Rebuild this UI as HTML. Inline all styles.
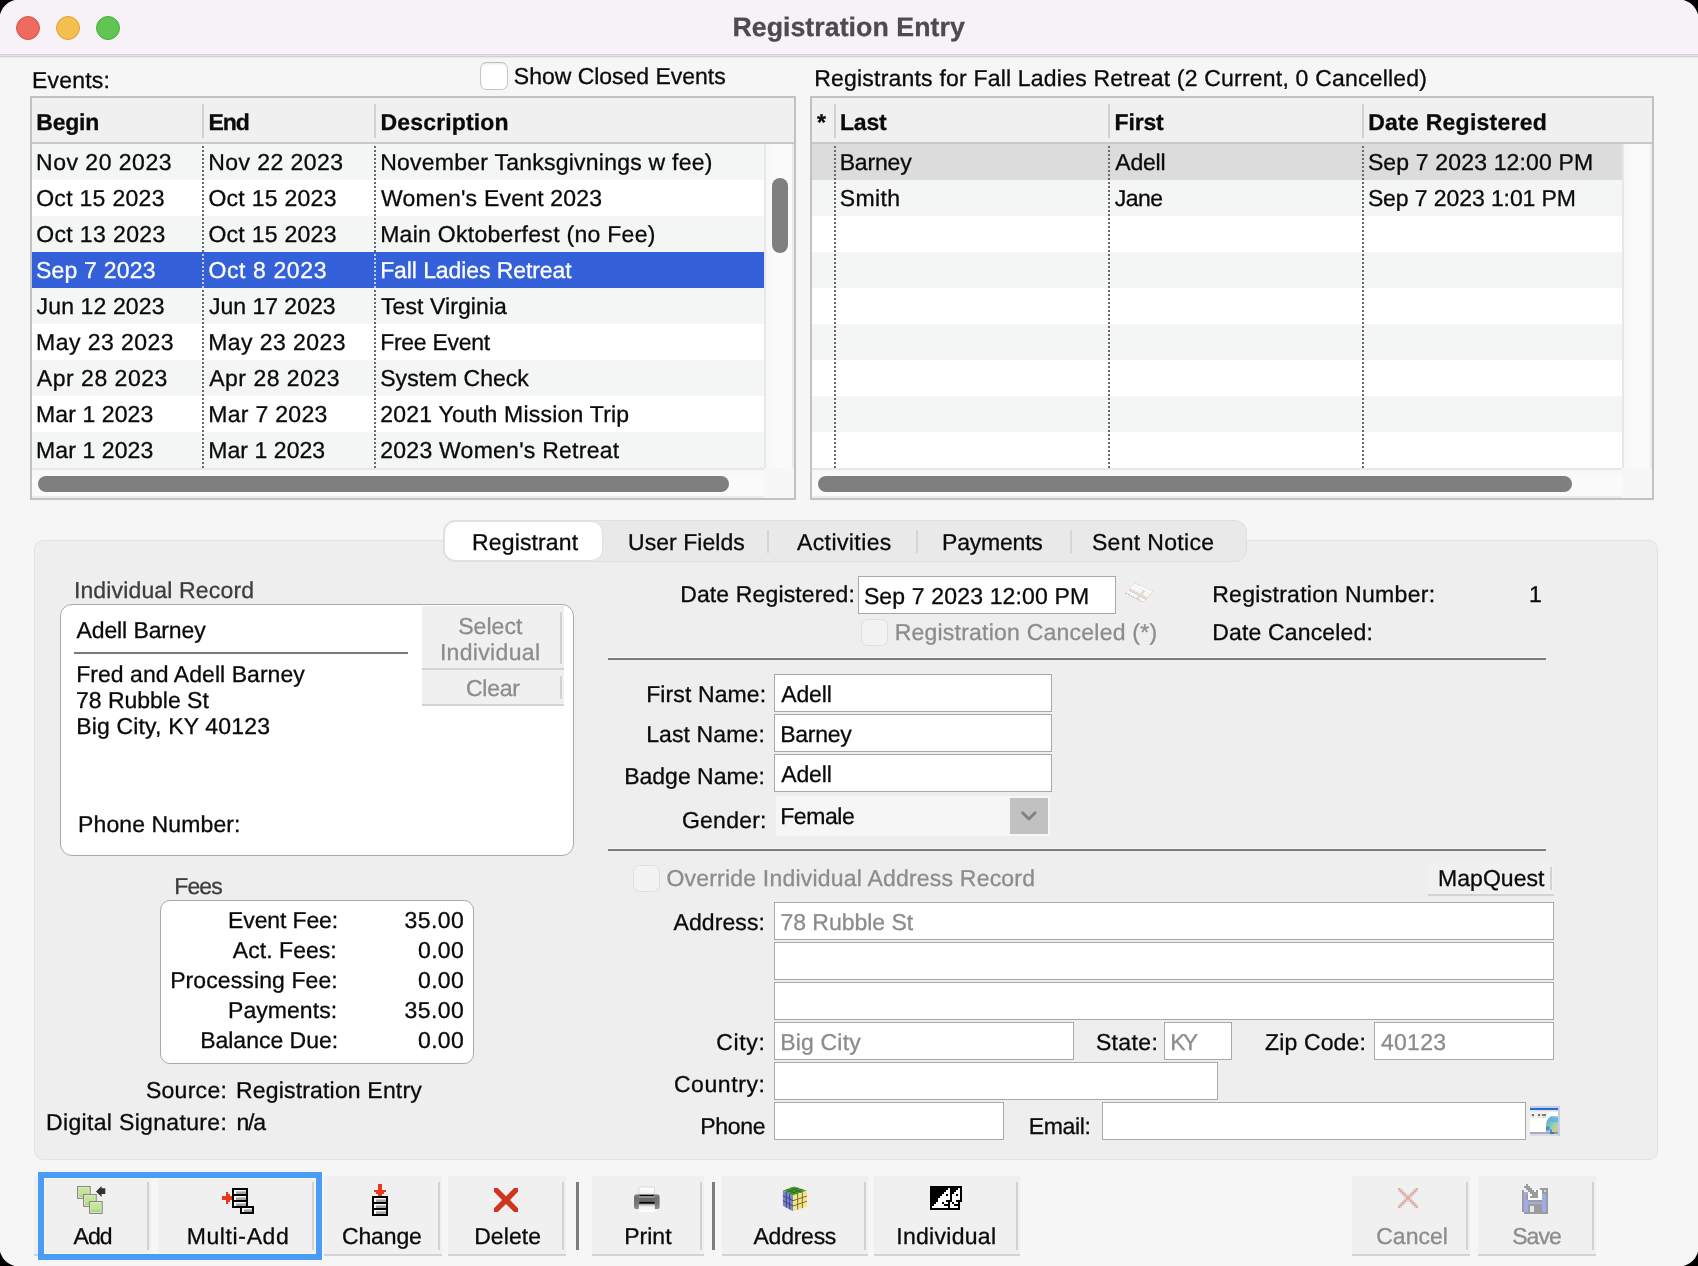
<!DOCTYPE html>
<html><head><meta charset="utf-8"><title>Registration Entry</title>
<style>

html,body{margin:0;padding:0;background:#000;}
body{width:1698px;height:1266px;overflow:hidden;font-family:"Liberation Sans",sans-serif;}
#win{will-change:transform;position:absolute;left:0;top:0;width:1698px;height:1266px;background:#f6f6f6;overflow:hidden;}
#win *{position:absolute;box-sizing:border-box;}
.t{text-rendering:geometricPrecision;font-size:23px;line-height:23px;white-space:pre;color:#0a0a0a;-webkit-text-stroke:0.3px;}
#tb{left:0;top:0;width:1698px;height:53px;background:#f6f2f8;}
#tbl{left:0;top:53px;width:1698px;height:6px;background:linear-gradient(to bottom,#faf6fc 0,#faf6fc 1px,#d2ced3 1px,#d2ced3 2px,#e7e4e9 2px,#e7e4e9 3px,#d1d1d1 3px,#d1d1d1 4px,#eaeaea 4px,#eaeaea 5px,#f3f3f3 5px,#f3f3f3 6px);}
.tl{top:16px;width:24px;height:24px;border-radius:12px;}
.tbx{border:2px solid #c2c2c2;background:#fff;}
.hdr{background:#f0f0f0;border-bottom:2px solid #c9c9c9;}
.hs{width:2px;top:8px;height:34px;background:#d1d1d1;}
.row{height:36px;}
.alt{background:#f4f5f5;}
.sel{background:#3461d9;}
.gsel{background:#dcdcdc;}
.dot{width:2px;background:repeating-linear-gradient(to bottom,transparent 0,transparent 2px,#696969 2px,#696969 4px);}
.dotw{width:2px;background:repeating-linear-gradient(to bottom,transparent 0,transparent 2px,#c3cff2 2px,#c3cff2 4px);}
.vtrack{background:linear-gradient(to right,#e7e7e7 0,#e7e7e7 2px,#f7f7f7 2px,#fbfbfb 14px,#fafafa 28px,#ececec 28px,#ececec 100%);}
.htrack{background:linear-gradient(to bottom,#e7e7e7 0,#e7e7e7 2px,#f7f7f7 2px,#fbfbfb 14px,#fafafa 28px,#ececec 28px,#ececec 100%);}
.corner{background:#f7f7f7;}
.thumb{background:#7f7f7f;border-radius:8px;}
.grp{background:#eeeeee;border:1px solid #e2e2e2;border-radius:9px;}
.tabs{background:#e9e9e9;border:1px solid #e0e0e0;border-radius:12px;}
.tabsel{background:#fff;border-radius:10px;box-shadow:0 0 2px rgba(0,0,0,.12);}
.tsep{width:2px;top:530px;height:23px;background:#d6d6d6;}
.wbox{background:#fff;border:1px solid #a9a9a9;}
.inp{background:#fff;border:1px solid #a8a8a8;}
.btn{background:#f0f0f0;border-bottom:2px solid #d3d3d3;}
.vl{width:2px;background:#d2d2d2;}
.ln{height:2px;background:#7b7b7b;box-shadow:0 -1px 0 rgba(255,255,255,.55);}
.cb{width:27px;height:27px;border-radius:6.5px;}
.cbd{background:#f2f2f2;border:1px solid #dedede;}
.cbe{width:27.6px;height:27.8px;background:#fff;border:1px solid #c6c6c6;border-top-color:#bdbdbd;box-shadow:inset 0 1.5px 1.5px rgba(0,0,0,.07);}
.vsep{width:2.6px;top:1182px;height:68px;background:#7c7c7c;}
svg{overflow:visible;}

</style></head>
<body>
<div id="win">
<div id="tb"></div><div id="tbl"></div>
<div class="tl" style="left:16px;background:#ed6a5e;border:1px solid #d5574b"></div>
<div class="tl" style="left:56px;background:#f5bf4f;border:1px solid #dba53a"></div>
<div class="tl" style="left:96px;background:#61c554;border:1px solid #4eaa41"></div>
<div class="cb cbe" style="left:480.2px;top:62px"></div>
<div class="tbx" style="left:30px;top:96px;width:766px;height:404px"></div>
<div class="hdr" style="left:32px;top:98px;width:762px;height:46px"></div>
<div class="hs" style="left:202px;top:104px"></div>
<div class="hs" style="left:374px;top:104px"></div>
<div class="row alt" style="left:32px;top:144px;width:732px"></div>
<div class="row alt" style="left:32px;top:216px;width:732px"></div>
<div class="row sel" style="left:32px;top:252px;width:732px"></div>
<div class="row alt" style="left:32px;top:288px;width:732px"></div>
<div class="row alt" style="left:32px;top:360px;width:732px"></div>
<div class="row alt" style="left:32px;top:432px;width:732px"></div>
<div class="dot" style="left:202px;top:144px;height:324px"></div>
<div class="sel" style="left:202px;top:252px;width:2px;height:36px"></div>
<div class="dotw" style="left:202px;top:252px;height:36px"></div>
<div class="dot" style="left:374px;top:144px;height:324px"></div>
<div class="sel" style="left:374px;top:252px;width:2px;height:36px"></div>
<div class="dotw" style="left:374px;top:252px;height:36px"></div>
<div class="vtrack" style="left:764px;top:144px;width:30px;height:324px"></div>
<div class="htrack" style="left:32px;top:468px;width:732px;height:30px"></div>
<div class="corner" style="left:764px;top:468px;width:30px;height:30px"></div>
<div class="thumb" style="left:772px;top:178px;width:16px;height:75px"></div>
<div class="thumb" style="left:38px;top:476px;width:691px;height:16px"></div>
<div class="tbx" style="left:810px;top:96px;width:844px;height:404px"></div>
<div class="hdr" style="left:812px;top:98px;width:840px;height:46px"></div>
<div class="hs" style="left:834px;top:104px"></div>
<div class="hs" style="left:1108px;top:104px"></div>
<div class="hs" style="left:1362px;top:104px"></div>
<div class="row gsel" style="left:812px;top:144px;width:810px"></div>
<div class="row alt" style="left:812px;top:180px;width:810px"></div>
<div class="row alt" style="left:812px;top:252px;width:810px"></div>
<div class="row alt" style="left:812px;top:324px;width:810px"></div>
<div class="row alt" style="left:812px;top:396px;width:810px"></div>
<div class="dot" style="left:834px;top:144px;height:324px"></div>
<div class="dot" style="left:1108px;top:144px;height:324px"></div>
<div class="dot" style="left:1362px;top:144px;height:324px"></div>
<div class="vtrack" style="left:1622px;top:144px;width:30px;height:324px"></div>
<div class="htrack" style="left:812px;top:468px;width:810px;height:30px"></div>
<div class="corner" style="left:1622px;top:468px;width:30px;height:30px"></div>
<div class="thumb" style="left:818px;top:476px;width:754px;height:16px"></div>
<div class="grp" style="left:34px;top:540px;width:1624px;height:620px"></div>
<div class="tabs" style="left:443px;top:520px;width:804px;height:42px"></div>
<div class="tabsel" style="left:445px;top:522px;width:156.5px;height:38px"></div>
<div class="tsep" style="left:767px"></div>
<div class="tsep" style="left:916px"></div>
<div class="tsep" style="left:1069.5px"></div>
<div class="wbox" style="left:60px;top:604px;width:514px;height:252px;border-radius:12px"></div>
<div style="left:74px;top:651.5px;width:334px;height:2px;background:#7b7b7b"></div>
<div class="btn" style="left:422px;top:606px;width:142px;height:64px"></div><div class="vl" style="left:560px;top:612px;height:52px"></div>
<div class="btn" style="left:422px;top:670px;width:142px;height:36px"></div><div class="vl" style="left:560px;top:676px;height:23px"></div>
<div class="wbox" style="left:160px;top:900px;width:314px;height:164px;border-radius:10px"></div>
<div class="inp" style="left:858px;top:576px;width:258px;height:38px"></div>
<div class="cb cbd" style="left:860.5px;top:618.5px"></div>
<div class="ln" style="left:608px;top:658px;width:938px"></div>
<div class="inp" style="left:774px;top:674px;width:278px;height:38px"></div>
<div class="inp" style="left:774px;top:714px;width:278px;height:38px"></div>
<div class="inp" style="left:774px;top:754px;width:278px;height:38px"></div>
<div style="left:776px;top:796px;width:274px;height:40px;background:#f6f6f6"></div>
<div style="left:1010px;top:798px;width:38px;height:36px;background:#c1c1c1"></div>
<svg style="left:1010px;top:798px" width="38" height="36" viewBox="0 0 38 36" ><path d="M12.6 14.7 L18.9 21 L25.2 14.7" fill="none" stroke="#818181" stroke-width="2.8" stroke-linecap="round" stroke-linejoin="round"/></svg>
<div class="ln" style="left:608px;top:849px;width:938px"></div>
<div class="cb cbd" style="left:632.5px;top:864.5px"></div>
<div class="btn" style="left:1428px;top:861px;width:126px;height:35px"></div><div class="vl" style="left:1550px;top:867px;height:23px"></div>
<div class="inp" style="left:774px;top:902px;width:780px;height:38px"></div>
<div class="inp" style="left:774px;top:942px;width:780px;height:38px"></div>
<div class="inp" style="left:774px;top:982px;width:780px;height:38px"></div>
<div class="inp" style="left:774px;top:1022px;width:300px;height:38px"></div>
<div class="inp" style="left:1164px;top:1022px;width:68px;height:38px"></div>
<div class="inp" style="left:1374px;top:1022px;width:180px;height:38px"></div>
<div class="inp" style="left:774px;top:1062px;width:444px;height:38px"></div>
<div class="inp" style="left:774px;top:1102px;width:230px;height:38px"></div>
<div class="inp" style="left:1102px;top:1102px;width:424px;height:38px"></div>
<svg style="left:1124px;top:582px" width="30" height="22" viewBox="0 0 30 22" ><polygon points="1.3,10.4 10.9,1 29,9.3 19.1,20.3" fill="#fbfbfb" stroke="#e2e2e2" stroke-width="0.7"/><path d="M5 7.5 L22.5 16.5" stroke="#ecd0d0" stroke-width="2.6" opacity=".9"/><path d="M20.3 8.5 L13.2 17" stroke="#d4e3d0" stroke-width="2.6" opacity=".9"/><path d="M1.8 11 L19.1 20.2" stroke="#9a9a9a" stroke-width="1.1" stroke-dasharray="1.3 1.5" opacity=".75"/><path d="M28.6 9.6 L19.4 20" stroke="#a5a5a5" stroke-width="1" stroke-dasharray="1.2 2" opacity=".6"/><path d="M11.5 1.6 L17 4" stroke="#aaa" stroke-width="1" stroke-dasharray="1.2 1.6" opacity=".6"/><path d="M8.5 3.4 L26.5 12 M6 5.8 L24.2 14.6 M3.6 8.2 L21.6 17.4 M14.5 2.7 L5 12.3 M18.5 4.5 L8.8 14.6 M22 6.2 L12.4 16.6 M25.5 7.8 L15.8 18.4" stroke="#b8b8b8" stroke-width="0.6" stroke-dasharray="1 1.4" opacity=".55" fill="none"/></svg>
<svg style="left:1530px;top:1106px" width="30" height="30" viewBox="0 0 30 30" ><defs><linearGradient id="wg" x1="0" y1="0" x2="1" y2="1"><stop offset="0" stop-color="#4a9be6"/><stop offset="0.45" stop-color="#7fc7c0"/><stop offset="0.8" stop-color="#c9cf8c"/><stop offset="1" stop-color="#d8c07c"/></linearGradient></defs><rect x="0" y="0" width="30" height="30" fill="#c3cdf2"/><rect x="0" y="2" width="28" height="2.2" fill="#2a6bcc"/><rect x="26.2" y="2" width="1.8" height="2.2" fill="#5a57a8"/><rect x="0" y="4.2" width="28" height="1.8" fill="#e6edf1"/><rect x="0" y="6" width="28" height="6" fill="#f1f1ee"/><rect x="1.8" y="8" width="2.2" height="2" fill="#70706c"/><rect x="8" y="8" width="2.2" height="2" fill="#70706c"/><rect x="12" y="8" width="4" height="2" fill="#7a7a76"/><rect x="2" y="10.8" width="2" height="0.9" fill="#cfcfcb"/><rect x="8" y="10.8" width="2" height="0.9" fill="#cfcfcb"/><rect x="12" y="10.8" width="4" height="0.9" fill="#cfcfcb"/><rect x="18" y="6" width="10" height="4" fill="#fffffc"/><rect x="0" y="12" width="28" height="14" fill="#fffffc"/><path d="M28 10.2 H21 Q16 13 16 20 V26 H28 Z" fill="url(#wg)"/><path d="M28 12 H22 Q19.5 13.2 18.6 16 H28 Z" fill="#5cb5ea" opacity=".9"/><rect x="16" y="20.5" width="3.6" height="3.6" fill="#3d90e0"/><rect x="20" y="23.5" width="2" height="2.5" fill="#3d90e0"/><rect x="0" y="26" width="28" height="2" fill="#aaa7c8"/><rect x="20" y="26" width="4" height="2" fill="#3f78c6"/><rect x="24" y="26" width="4" height="2" fill="#97978f"/><rect x="0" y="28" width="28" height="2" fill="#dcdcdc"/></svg>
<div class="btn" style="left:34px;top:1176px;width:117px;height:80px"></div><div class="vl" style="left:147px;top:1182px;height:68px"></div>
<div class="btn" style="left:158px;top:1176px;width:158px;height:80px"></div><div class="vl" style="left:312px;top:1182px;height:68px"></div>
<div class="btn" style="left:324px;top:1176px;width:118px;height:80px"></div><div class="vl" style="left:438px;top:1182px;height:68px"></div>
<div class="btn" style="left:448px;top:1176px;width:118px;height:80px"></div><div class="vl" style="left:562px;top:1182px;height:68px"></div>
<div class="btn" style="left:592px;top:1176px;width:111.5px;height:80px"></div><div class="vl" style="left:699.5px;top:1182px;height:68px"></div>
<div class="btn" style="left:722px;top:1176px;width:145.5px;height:80px"></div><div class="vl" style="left:863.5px;top:1182px;height:68px"></div>
<div class="btn" style="left:874px;top:1176px;width:145.5px;height:80px"></div><div class="vl" style="left:1015.5px;top:1182px;height:68px"></div>
<div class="btn" style="left:1352px;top:1176px;width:117.5px;height:80px"></div><div class="vl" style="left:1465.5px;top:1182px;height:68px"></div>
<div class="btn" style="left:1478px;top:1176px;width:117.5px;height:80px"></div><div class="vl" style="left:1591.5px;top:1182px;height:68px"></div>
<div style="left:38px;top:1172px;width:284px;height:88px;border:6px solid #4a9df6;box-shadow:inset 0 0 0 1px rgba(255,246,235,.8)"></div>
<div class="vsep" style="left:576px"></div><div class="vsep" style="left:712px"></div>
<svg style="left:77px;top:1186px" width="30" height="30" viewBox="0 0 30 30" ><defs><linearGradient id="gg" x1="0" y1="0" x2="0" y2="1"><stop offset="0" stop-color="#c6e79c"/><stop offset="0.65" stop-color="#c2e396"/><stop offset="1" stop-color="#a9d07c"/></linearGradient></defs><rect x="0.1" y="0.1" width="13.6" height="12.8" fill="#7d7d7d"/><rect x="1.1" y="1.0" width="11.6" height="10.9" fill="#dcf0c0"/><rect x="2.0" y="1.8" width="9.8" height="9.2" fill="url(#gg)"/><rect x="6.1" y="8.1" width="13.6" height="12.8" fill="#7d7d7d"/><rect x="7.1" y="9.0" width="11.6" height="10.9" fill="#dcf0c0"/><rect x="8.0" y="9.799999999999999" width="9.8" height="9.2" fill="url(#gg)"/><rect x="12.1" y="15.1" width="13.6" height="12.8" fill="#7d7d7d"/><rect x="13.1" y="16.0" width="11.6" height="10.9" fill="#dcf0c0"/><rect x="14.0" y="16.8" width="9.8" height="9.2" fill="url(#gg)"/><path d="M19 5.5 L24.6 -0.1 L24.6 2.2 L28.3 2.2 L28.3 7.9 L24.6 7.9 L24.6 11 Z" fill="#333"/></svg>
<svg style="left:222px;top:1184px" width="32" height="32" viewBox="0 0 32 32" ><g shape-rendering="crispEdges"><rect x="10" y="4" width="16" height="20" fill="#000"/><rect x="18" y="22" width="14" height="8" fill="#000"/><rect x="12" y="6" width="12" height="4" fill="#fff"/><rect x="14" y="7.3" width="10" height="2.7" fill="#a4a4a4"/><rect x="14" y="7.3" width="10" height="1" fill="#c8c8c8"/><rect x="12" y="12" width="12" height="4" fill="#fff"/><rect x="14" y="13.3" width="10" height="2.7" fill="#a4a4a4"/><rect x="14" y="13.3" width="10" height="1" fill="#c8c8c8"/><rect x="12" y="18" width="12" height="4" fill="#fff"/><rect x="14" y="19.3" width="10" height="2.7" fill="#a4a4a4"/><rect x="14" y="19.3" width="10" height="1" fill="#c8c8c8"/><rect x="20" y="24" width="10" height="4" fill="#fff"/><rect x="22" y="25.3" width="8" height="2.7" fill="#a4a4a4"/><rect x="22" y="25.3" width="8" height="1" fill="#c8c8c8"/><rect x="0" y="12" width="10" height="4" fill="#e8391d"/><rect x="4" y="8" width="2" height="12" fill="#e8391d"/><rect x="6" y="10" width="2" height="8" fill="#e8391d"/></g></svg>
<svg style="left:366px;top:1184px" width="32" height="32" viewBox="0 0 32 32" ><g shape-rendering="crispEdges"><rect x="6" y="12" width="16" height="20" fill="#000"/><rect x="8" y="14" width="12" height="4" fill="#fff"/><rect x="10" y="15.3" width="10" height="2.7" fill="#a4a4a4"/><rect x="10" y="15.3" width="10" height="1" fill="#c8c8c8"/><rect x="8" y="20" width="12" height="4" fill="#fff"/><rect x="10" y="21.3" width="10" height="2.7" fill="#a4a4a4"/><rect x="10" y="21.3" width="10" height="1" fill="#c8c8c8"/><rect x="8" y="26" width="12" height="4" fill="#fff"/><rect x="10" y="27.3" width="10" height="2.7" fill="#a4a4a4"/><rect x="10" y="27.3" width="10" height="1" fill="#c8c8c8"/><rect x="12" y="0" width="4" height="12" fill="#e8391d"/><rect x="8" y="6" width="12" height="2" fill="#e8391d"/><rect x="10" y="8" width="8" height="2" fill="#e8391d"/></g></svg>
<svg style="left:494px;top:1188px" width="24" height="24" viewBox="0 0 24 24" ><polygon points="0,0 3.8,0 12,8.2 20.1,0 24,0 24,3.7 16,11.9 24,20.2 24,24 20.1,24 12,16 3.8,24 0,24 0,20.2 8.1,11.9 0,3.7" fill="#d0361e"/></svg>
<svg style="left:634.3px;top:1187px" width="26" height="26" viewBox="0 0 26 26" ><defs><linearGradient id="pb" x1="0" y1="0" x2="0" y2="1"><stop offset="0" stop-color="#8a8a8a"/><stop offset="0.25" stop-color="#6e6e6e"/><stop offset="0.6" stop-color="#757575"/><stop offset="1" stop-color="#8e8e8e"/></linearGradient><linearGradient id="pp" x1="0" y1="0" x2="0" y2="1"><stop offset="0" stop-color="#9a9a9a"/><stop offset="0.35" stop-color="#f2f2f2"/><stop offset="1" stop-color="#ffffff"/></linearGradient><linearGradient id="pt" x1="0" y1="0" x2="0" y2="1"><stop offset="0" stop-color="#ffffff"/><stop offset="0.6" stop-color="#f6f6f6"/><stop offset="1" stop-color="#dedede"/></linearGradient></defs><rect x="4.8" y="0" width="15.8" height="8.5" rx="0.8" fill="url(#pt)" stroke="#d0d0d0" stroke-width="0.8"/><rect x="0" y="7.2" width="25.6" height="14.8" rx="2.6" fill="url(#pb)"/><rect x="5.6" y="7.9" width="14.2" height="1.6" fill="#050505"/><rect x="5.2" y="9.5" width="15.2" height="1.1" fill="#d8d8d8"/><rect x="5.6" y="10.6" width="14.6" height="4.4" fill="#666"/><rect x="5.2" y="14.9" width="15.4" height="2" fill="#050505"/><path d="M4.8 16.8 H20.8 V23.6 Q20.8 25 19.4 25 H6.2 Q4.8 25 4.8 23.6 Z" fill="url(#pp)"/></svg>
<svg style="left:782px;top:1186px" width="26" height="26" viewBox="0 0 26 26" ><polygon points="0.9,4.6 12.2,0.4 24.9,4.8 11,9.4" fill="#4f9b38"/><polygon points="0.9,4.6 11,9.4 11,25.3 0.9,19.7" fill="#7a82d2"/><polygon points="11,9.4 25,4.8 25,20.5 11,25.3" fill="#f6e680"/><g stroke="#2a2a4a" stroke-width="0.9" fill="none" opacity="0.75"><path d="M4.3 6.2 V21.6 M7.6 7.8 V23.4 M0.9 9.6 L11 14.7 M0.9 14.6 L11 20"/><path d="M15.7 7.9 V23.7 M20.3 6.4 V22.1 M11 14.7 L25 10 M11 20 L25 15.2" stroke="#3a3420"/><path d="M4.7 3.2 L15.7 7.9 M8.4 1.8 L20.3 6.4 M4.3 6.2 L16.4 1.9 M7.6 7.8 L20.7 3.3" stroke="#1f5a1a"/></g></svg>
<svg style="left:930px;top:1186px" width="32" height="24" viewBox="0 0 32 24" ><g shape-rendering="crispEdges"><rect x="0" y="0" width="2" height="2" fill="#000"/><rect x="2" y="0" width="2" height="2" fill="#000"/><rect x="4" y="0" width="2" height="2" fill="#000"/><rect x="6" y="0" width="2" height="2" fill="#000"/><rect x="8" y="0" width="2" height="2" fill="#000"/><rect x="10" y="0" width="2" height="2" fill="#000"/><rect x="12" y="0" width="2" height="2" fill="#000"/><rect x="14" y="0" width="2" height="2" fill="#000"/><rect x="16" y="0" width="2" height="2" fill="#000"/><rect x="18" y="0" width="2" height="2" fill="#000"/><rect x="20" y="0" width="2" height="2" fill="#000"/><rect x="22" y="0" width="2" height="2" fill="#000"/><rect x="24" y="0" width="2" height="2" fill="#000"/><rect x="26" y="0" width="2" height="2" fill="#000"/><rect x="28" y="0" width="2" height="2" fill="#000"/><rect x="30" y="0" width="2" height="2" fill="#000"/><rect x="0" y="2" width="2" height="2" fill="#000"/><rect x="2" y="2" width="2" height="2" fill="#000"/><rect x="4" y="2" width="2" height="2" fill="#000"/><rect x="6" y="2" width="2" height="2" fill="#000"/><rect x="8" y="2" width="2" height="2" fill="#000"/><rect x="10" y="2" width="2" height="2" fill="#000"/><rect x="12" y="2" width="2" height="2" fill="#000"/><rect x="14" y="2" width="2" height="2" fill="#000"/><rect x="16" y="2" width="2" height="2" fill="#000"/><rect x="20" y="2" width="2" height="2" fill="#000"/><rect x="22" y="2" width="2" height="2" fill="#000"/><rect x="24" y="2" width="2" height="2" fill="#000"/><rect x="26" y="2" width="2" height="2" fill="#000"/><rect x="30" y="2" width="2" height="2" fill="#000"/><rect x="0" y="4" width="2" height="2" fill="#000"/><rect x="2" y="4" width="2" height="2" fill="#000"/><rect x="4" y="4" width="2" height="2" fill="#000"/><rect x="6" y="4" width="2" height="2" fill="#000"/><rect x="8" y="4" width="2" height="2" fill="#000"/><rect x="10" y="4" width="2" height="2" fill="#000"/><rect x="12" y="4" width="2" height="2" fill="#000"/><rect x="14" y="4" width="2" height="2" fill="#000"/><rect x="20" y="4" width="2" height="2" fill="#000"/><rect x="22" y="4" width="2" height="2" fill="#000"/><rect x="24" y="4" width="2" height="2" fill="#000"/><rect x="30" y="4" width="2" height="2" fill="#000"/><rect x="0" y="6" width="2" height="2" fill="#000"/><rect x="2" y="6" width="2" height="2" fill="#000"/><rect x="4" y="6" width="2" height="2" fill="#000"/><rect x="6" y="6" width="2" height="2" fill="#000"/><rect x="8" y="6" width="2" height="2" fill="#000"/><rect x="10" y="6" width="2" height="2" fill="#000"/><rect x="12" y="6" width="2" height="2" fill="#000"/><rect x="20" y="6" width="2" height="2" fill="#000"/><rect x="22" y="6" width="2" height="2" fill="#000"/><rect x="30" y="6" width="2" height="2" fill="#000"/><rect x="0" y="8" width="2" height="2" fill="#000"/><rect x="2" y="8" width="2" height="2" fill="#000"/><rect x="4" y="8" width="2" height="2" fill="#000"/><rect x="6" y="8" width="2" height="2" fill="#000"/><rect x="8" y="8" width="2" height="2" fill="#000"/><rect x="10" y="8" width="2" height="2" fill="#000"/><rect x="16" y="8" width="2" height="2" fill="#000"/><rect x="20" y="8" width="2" height="2" fill="#000"/><rect x="26" y="8" width="2" height="2" fill="#000"/><rect x="30" y="8" width="2" height="2" fill="#000"/><rect x="0" y="10" width="2" height="2" fill="#000"/><rect x="2" y="10" width="2" height="2" fill="#000"/><rect x="4" y="10" width="2" height="2" fill="#000"/><rect x="6" y="10" width="2" height="2" fill="#000"/><rect x="8" y="10" width="2" height="2" fill="#000"/><rect x="20" y="10" width="2" height="2" fill="#000"/><rect x="30" y="10" width="2" height="2" fill="#000"/><rect x="0" y="12" width="2" height="2" fill="#000"/><rect x="2" y="12" width="2" height="2" fill="#000"/><rect x="4" y="12" width="2" height="2" fill="#000"/><rect x="6" y="12" width="2" height="2" fill="#000"/><rect x="20" y="12" width="2" height="2" fill="#000"/><rect x="30" y="12" width="2" height="2" fill="#000"/><rect x="0" y="14" width="2" height="2" fill="#000"/><rect x="2" y="14" width="2" height="2" fill="#000"/><rect x="4" y="14" width="2" height="2" fill="#000"/><rect x="6" y="14" width="2" height="2" fill="#000"/><rect x="16" y="14" width="2" height="2" fill="#000"/><rect x="18" y="14" width="2" height="2" fill="#000"/><rect x="20" y="14" width="2" height="2" fill="#000"/><rect x="26" y="14" width="2" height="2" fill="#000"/><rect x="28" y="14" width="2" height="2" fill="#000"/><rect x="30" y="14" width="2" height="2" fill="#000"/><rect x="0" y="16" width="2" height="2" fill="#000"/><rect x="2" y="16" width="2" height="2" fill="#000"/><rect x="4" y="16" width="2" height="2" fill="#000"/><rect x="12" y="16" width="2" height="2" fill="#000"/><rect x="18" y="16" width="2" height="2" fill="#000"/><rect x="22" y="16" width="2" height="2" fill="#000"/><rect x="28" y="16" width="2" height="2" fill="#000"/><rect x="0" y="18" width="2" height="2" fill="#000"/><rect x="2" y="18" width="2" height="2" fill="#000"/><rect x="14" y="18" width="2" height="2" fill="#000"/><rect x="16" y="18" width="2" height="2" fill="#000"/><rect x="18" y="18" width="2" height="2" fill="#000"/><rect x="24" y="18" width="2" height="2" fill="#000"/><rect x="26" y="18" width="2" height="2" fill="#000"/><rect x="28" y="18" width="2" height="2" fill="#000"/><rect x="0" y="20" width="2" height="2" fill="#000"/><rect x="18" y="20" width="2" height="2" fill="#000"/><rect x="28" y="20" width="2" height="2" fill="#000"/><rect x="0" y="22" width="2" height="2" fill="#000"/><rect x="2" y="22" width="2" height="2" fill="#000"/><rect x="4" y="22" width="2" height="2" fill="#000"/><rect x="6" y="22" width="2" height="2" fill="#000"/><rect x="8" y="22" width="2" height="2" fill="#000"/><rect x="10" y="22" width="2" height="2" fill="#000"/><rect x="12" y="22" width="2" height="2" fill="#000"/><rect x="14" y="22" width="2" height="2" fill="#000"/><rect x="16" y="22" width="2" height="2" fill="#000"/><rect x="18" y="22" width="2" height="2" fill="#000"/><rect x="20" y="22" width="2" height="2" fill="#000"/><rect x="22" y="22" width="2" height="2" fill="#000"/><rect x="24" y="22" width="2" height="2" fill="#000"/><rect x="26" y="22" width="2" height="2" fill="#000"/><rect x="28" y="22" width="2" height="2" fill="#000"/><rect x="18" y="2" width="2" height="2" fill="#fff"/><rect x="28" y="2" width="2" height="2" fill="#fff"/><rect x="16" y="4" width="2" height="2" fill="#fff"/><rect x="18" y="4" width="2" height="2" fill="#fff"/><rect x="26" y="4" width="2" height="2" fill="#fff"/><rect x="28" y="4" width="2" height="2" fill="#fff"/><rect x="14" y="6" width="2" height="2" fill="#fff"/><rect x="16" y="6" width="2" height="2" fill="#fff"/><rect x="18" y="6" width="2" height="2" fill="#fff"/><rect x="24" y="6" width="2" height="2" fill="#fff"/><rect x="26" y="6" width="2" height="2" fill="#fff"/><rect x="28" y="6" width="2" height="2" fill="#fff"/><rect x="12" y="8" width="2" height="2" fill="#fff"/><rect x="14" y="8" width="2" height="2" fill="#fff"/><rect x="18" y="8" width="2" height="2" fill="#fff"/><rect x="22" y="8" width="2" height="2" fill="#fff"/><rect x="24" y="8" width="2" height="2" fill="#fff"/><rect x="28" y="8" width="2" height="2" fill="#fff"/><rect x="10" y="10" width="2" height="2" fill="#fff"/><rect x="12" y="10" width="2" height="2" fill="#fff"/><rect x="14" y="10" width="2" height="2" fill="#fff"/><rect x="16" y="10" width="2" height="2" fill="#fff"/><rect x="18" y="10" width="2" height="2" fill="#fff"/><rect x="22" y="10" width="2" height="2" fill="#fff"/><rect x="24" y="10" width="2" height="2" fill="#fff"/><rect x="26" y="10" width="2" height="2" fill="#fff"/><rect x="28" y="10" width="2" height="2" fill="#fff"/><rect x="8" y="12" width="2" height="2" fill="#fff"/><rect x="10" y="12" width="2" height="2" fill="#fff"/><rect x="12" y="12" width="2" height="2" fill="#fff"/><rect x="14" y="12" width="2" height="2" fill="#fff"/><rect x="16" y="12" width="2" height="2" fill="#fff"/><rect x="18" y="12" width="2" height="2" fill="#fff"/><rect x="22" y="12" width="2" height="2" fill="#fff"/><rect x="24" y="12" width="2" height="2" fill="#fff"/><rect x="26" y="12" width="2" height="2" fill="#fff"/><rect x="28" y="12" width="2" height="2" fill="#fff"/><rect x="8" y="14" width="2" height="2" fill="#fff"/><rect x="10" y="14" width="2" height="2" fill="#fff"/><rect x="12" y="14" width="2" height="2" fill="#fff"/><rect x="14" y="14" width="2" height="2" fill="#fff"/><rect x="22" y="14" width="2" height="2" fill="#fff"/><rect x="24" y="14" width="2" height="2" fill="#fff"/><rect x="6" y="16" width="2" height="2" fill="#fff"/><rect x="8" y="16" width="2" height="2" fill="#fff"/><rect x="10" y="16" width="2" height="2" fill="#fff"/><rect x="14" y="16" width="2" height="2" fill="#fff"/><rect x="16" y="16" width="2" height="2" fill="#fff"/><rect x="20" y="16" width="2" height="2" fill="#fff"/><rect x="24" y="16" width="2" height="2" fill="#fff"/><rect x="26" y="16" width="2" height="2" fill="#fff"/><rect x="4" y="18" width="2" height="2" fill="#fff"/><rect x="6" y="18" width="2" height="2" fill="#fff"/><rect x="8" y="18" width="2" height="2" fill="#fff"/><rect x="10" y="18" width="2" height="2" fill="#fff"/><rect x="12" y="18" width="2" height="2" fill="#fff"/><rect x="20" y="18" width="2" height="2" fill="#fff"/><rect x="22" y="18" width="2" height="2" fill="#fff"/><rect x="2" y="20" width="2" height="2" fill="#fff"/><rect x="4" y="20" width="2" height="2" fill="#fff"/><rect x="6" y="20" width="2" height="2" fill="#fff"/><rect x="8" y="20" width="2" height="2" fill="#fff"/><rect x="10" y="20" width="2" height="2" fill="#fff"/><rect x="12" y="20" width="2" height="2" fill="#fff"/><rect x="14" y="20" width="2" height="2" fill="#fff"/><rect x="16" y="20" width="2" height="2" fill="#fff"/><rect x="20" y="20" width="2" height="2" fill="#fff"/><rect x="22" y="20" width="2" height="2" fill="#fff"/><rect x="24" y="20" width="2" height="2" fill="#fff"/><rect x="26" y="20" width="2" height="2" fill="#fff"/></g></svg>
<svg style="left:1398px;top:1188px" width="20" height="20" viewBox="0 0 20 20" ><g shape-rendering="crispEdges"><rect x="2" y="0" width="2" height="2" fill="#d3d7d7"/><rect x="16" y="0" width="2" height="2" fill="#d3d7d7"/><rect x="0" y="2" width="2" height="2" fill="#d3d7d7"/><rect x="4" y="2" width="2" height="2" fill="#d3d7d7"/><rect x="14" y="2" width="2" height="2" fill="#d3d7d7"/><rect x="18" y="2" width="2" height="2" fill="#d3d7d7"/><rect x="2" y="4" width="2" height="2" fill="#d3d7d7"/><rect x="6" y="4" width="2" height="2" fill="#d3d7d7"/><rect x="12" y="4" width="2" height="2" fill="#d3d7d7"/><rect x="16" y="4" width="2" height="2" fill="#d3d7d7"/><rect x="4" y="6" width="2" height="2" fill="#d3d7d7"/><rect x="8" y="6" width="2" height="2" fill="#d3d7d7"/><rect x="10" y="6" width="2" height="2" fill="#d3d7d7"/><rect x="14" y="6" width="2" height="2" fill="#d3d7d7"/><rect x="6" y="8" width="2" height="2" fill="#d3d7d7"/><rect x="10" y="8" width="2" height="2" fill="#d3d7d7"/><rect x="8" y="8" width="2" height="2" fill="#d3d7d7"/><rect x="12" y="8" width="2" height="2" fill="#d3d7d7"/><rect x="8" y="10" width="2" height="2" fill="#d3d7d7"/><rect x="12" y="10" width="2" height="2" fill="#d3d7d7"/><rect x="6" y="10" width="2" height="2" fill="#d3d7d7"/><rect x="10" y="10" width="2" height="2" fill="#d3d7d7"/><rect x="10" y="12" width="2" height="2" fill="#d3d7d7"/><rect x="14" y="12" width="2" height="2" fill="#d3d7d7"/><rect x="4" y="12" width="2" height="2" fill="#d3d7d7"/><rect x="8" y="12" width="2" height="2" fill="#d3d7d7"/><rect x="12" y="14" width="2" height="2" fill="#d3d7d7"/><rect x="16" y="14" width="2" height="2" fill="#d3d7d7"/><rect x="2" y="14" width="2" height="2" fill="#d3d7d7"/><rect x="6" y="14" width="2" height="2" fill="#d3d7d7"/><rect x="14" y="16" width="2" height="2" fill="#d3d7d7"/><rect x="18" y="16" width="2" height="2" fill="#d3d7d7"/><rect x="0" y="16" width="2" height="2" fill="#d3d7d7"/><rect x="4" y="16" width="2" height="2" fill="#d3d7d7"/><rect x="16" y="18" width="2" height="2" fill="#d3d7d7"/><rect x="2" y="18" width="2" height="2" fill="#d3d7d7"/><rect x="0" y="0" width="2" height="2" fill="#f1a39b"/><rect x="18" y="0" width="2" height="2" fill="#f1a39b"/><rect x="2" y="2" width="2" height="2" fill="#f1a39b"/><rect x="16" y="2" width="2" height="2" fill="#f1a39b"/><rect x="4" y="4" width="2" height="2" fill="#f1a39b"/><rect x="14" y="4" width="2" height="2" fill="#f1a39b"/><rect x="6" y="6" width="2" height="2" fill="#f1a39b"/><rect x="12" y="6" width="2" height="2" fill="#f1a39b"/><rect x="8" y="8" width="2" height="2" fill="#f1a39b"/><rect x="10" y="8" width="2" height="2" fill="#f1a39b"/><rect x="10" y="10" width="2" height="2" fill="#f1a39b"/><rect x="8" y="10" width="2" height="2" fill="#f1a39b"/><rect x="12" y="12" width="2" height="2" fill="#f1a39b"/><rect x="6" y="12" width="2" height="2" fill="#f1a39b"/><rect x="14" y="14" width="2" height="2" fill="#f1a39b"/><rect x="4" y="14" width="2" height="2" fill="#f1a39b"/><rect x="16" y="16" width="2" height="2" fill="#f1a39b"/><rect x="2" y="16" width="2" height="2" fill="#f1a39b"/><rect x="18" y="18" width="2" height="2" fill="#f1a39b"/><rect x="0" y="18" width="2" height="2" fill="#f1a39b"/><rect x="8" y="8" width="4" height="4" fill="#efa9a1"/></g></svg>
<svg style="left:1522px;top:1184px" width="28" height="32" viewBox="0 0 28 32" ><g shape-rendering="crispEdges"><rect x="0" y="6" width="2" height="22" fill="#9c9c9c"/><rect x="2" y="28" width="24" height="2" fill="#9c9c9c"/><rect x="24" y="4" width="2" height="24" fill="#9c9c9c"/><rect x="18" y="4" width="6" height="2" fill="#9c9c9c"/><rect x="20" y="6" width="4" height="4" fill="#9c9c9c"/><rect x="22" y="6" width="2" height="2" fill="#d5d5d5"/><rect x="6" y="6" width="14" height="10" fill="#fff"/><rect x="2" y="8" width="4" height="20" fill="#a1abeb"/><rect x="4" y="10" width="2" height="6" fill="#9c9c9c"/><rect x="20" y="10" width="4" height="18" fill="#a1abeb"/><rect x="6" y="16" width="14" height="2" fill="#9c9c9c"/><rect x="6" y="18" width="14" height="2" fill="#a1abeb"/><rect x="6" y="20" width="14" height="8" fill="#9c9c9c"/><rect x="8" y="22" width="4" height="6" fill="#e6e6e6"/><rect x="4" y="0" width="2" height="2" fill="#9c9c9c"/><rect x="2" y="2" width="6" height="2" fill="#9c9c9c"/><rect x="4" y="4" width="6" height="2" fill="#9c9c9c"/><rect x="6" y="6" width="6" height="2" fill="#9c9c9c"/><rect x="8" y="8" width="8" height="2" fill="#9c9c9c"/><rect x="14" y="6" width="2" height="2" fill="#9c9c9c"/><rect x="10" y="10" width="6" height="2" fill="#9c9c9c"/><rect x="8" y="12" width="8" height="2" fill="#9c9c9c"/></g></svg>
<svg style="left:0;top:0" width="1698" height="1266" viewBox="0 0 1698 1266"><path fill="#000" fill-rule="evenodd" d="M0 0H1698V1266H0Z M19.4 -0.6 H1678.6 A20 20 0 0 1 1698.6 19.4 V1246.6 A20 20 0 0 1 1678.6 1266.6 H19.4 A20 20 0 0 1 -0.6 1246.6 V19.4 A20 20 0 0 1 19.4 -0.6Z"/></svg>
<span class="t" style="left:732.42px;top:14.00px;letter-spacing:0.058px;font-size:26.7px;line-height:26.7px;font-weight:bold;color:#4d4b4f;">Registration Entry</span>
<span class="t" style="left:32.06px;top:69.00px;letter-spacing:0.183px;">Events:</span>
<span class="t" style="left:513.85px;top:65.00px;letter-spacing:-0.020px;">Show Closed Events</span>
<span class="t" style="left:814.26px;top:67.00px;letter-spacing:0.201px;">Registrants for Fall Ladies Retreat (2 Current, 0 Cancelled)</span>
<span class="t" style="left:36.21px;top:111.00px;letter-spacing:-0.178px;font-weight:bold;">Begin</span>
<span class="t" style="left:208.62px;top:111.00px;letter-spacing:-1.103px;font-weight:bold;">End</span>
<span class="t" style="left:380.62px;top:111.00px;letter-spacing:0.142px;font-weight:bold;">Description</span>
<span class="t" style="left:36.06px;top:151.00px;letter-spacing:0.500px;">Nov 20 2023</span>
<span class="t" style="left:208.17px;top:151.00px;letter-spacing:0.442px;">Nov 22 2023</span>
<span class="t" style="left:380.17px;top:151.00px;letter-spacing:0.240px;">November Tanksgivnings w fee)</span>
<span class="t" style="left:36.15px;top:187.00px;letter-spacing:0.303px;">Oct 15 2023</span>
<span class="t" style="left:208.39px;top:187.00px;letter-spacing:0.280px;">Oct 15 2023</span>
<span class="t" style="left:381.12px;top:187.00px;letter-spacing:0.209px;">Women's Event 2023</span>
<span class="t" style="left:36.15px;top:223.00px;letter-spacing:0.385px;">Oct 13 2023</span>
<span class="t" style="left:208.39px;top:223.00px;letter-spacing:0.280px;">Oct 15 2023</span>
<span class="t" style="left:380.17px;top:223.00px;letter-spacing:0.284px;">Main Oktoberfest (no Fee)</span>
<span class="t" style="left:35.89px;top:259.00px;letter-spacing:0.216px;color:#ffffff;">Sep 7 2023</span>
<span class="t" style="left:208.39px;top:259.00px;letter-spacing:0.621px;color:#ffffff;">Oct 8 2023</span>
<span class="t" style="left:380.17px;top:259.00px;letter-spacing:-0.090px;color:#ffffff;">Fall Ladies Retreat</span>
<span class="t" style="left:36.62px;top:295.00px;letter-spacing:0.127px;">Jun 12 2023</span>
<span class="t" style="left:208.98px;top:295.00px;letter-spacing:-0.010px;">Jun 17 2023</span>
<span class="t" style="left:381.02px;top:295.00px;letter-spacing:0.084px;">Test Virginia</span>
<span class="t" style="left:36.06px;top:331.00px;letter-spacing:0.445px;">May 23 2023</span>
<span class="t" style="left:208.17px;top:331.00px;letter-spacing:0.435px;">May 23 2023</span>
<span class="t" style="left:380.17px;top:331.00px;letter-spacing:-0.284px;">Free Event</span>
<span class="t" style="left:36.87px;top:367.00px;letter-spacing:0.512px;">Apr 28 2023</span>
<span class="t" style="left:209.26px;top:367.00px;letter-spacing:0.492px;">Apr 28 2023</span>
<span class="t" style="left:380.24px;top:367.00px;letter-spacing:0.032px;">System Check</span>
<span class="t" style="left:36.06px;top:403.00px;letter-spacing:0.100px;">Mar 1 2023</span>
<span class="t" style="left:208.17px;top:403.00px;letter-spacing:0.310px;">Mar 7 2023</span>
<span class="t" style="left:380.27px;top:403.00px;letter-spacing:0.212px;">2021 Youth Mission Trip</span>
<span class="t" style="left:36.06px;top:439.00px;letter-spacing:0.100px;">Mar 1 2023</span>
<span class="t" style="left:208.17px;top:439.00px;letter-spacing:0.071px;">Mar 1 2023</span>
<span class="t" style="left:380.27px;top:439.00px;letter-spacing:0.250px;">2023 Women's Retreat</span>
<span class="t" style="left:816.93px;top:111.00px;font-weight:bold;">*</span>
<span class="t" style="left:839.99px;top:111.00px;letter-spacing:-0.169px;font-weight:bold;">Last</span>
<span class="t" style="left:1114.62px;top:111.00px;letter-spacing:-0.171px;font-weight:bold;">First</span>
<span class="t" style="left:1368.22px;top:111.00px;letter-spacing:0.251px;font-weight:bold;">Date Registered</span>
<span class="t" style="left:839.64px;top:151.00px;letter-spacing:-0.153px;">Barney</span>
<span class="t" style="left:1115.26px;top:151.00px;letter-spacing:-0.203px;">Adell</span>
<span class="t" style="left:1367.89px;top:151.00px;letter-spacing:0.157px;">Sep 7 2023 12:00 PM</span>
<span class="t" style="left:839.71px;top:187.00px;letter-spacing:0.356px;">Smith</span>
<span class="t" style="left:1114.70px;top:187.00px;letter-spacing:-0.490px;">Jane</span>
<span class="t" style="left:1367.89px;top:187.00px;letter-spacing:-0.093px;">Sep 7 2023 1:01 PM</span>
<span class="t" style="left:472.04px;top:531.00px;letter-spacing:0.139px;">Registrant</span>
<span class="t" style="left:628.00px;top:531.00px;letter-spacing:0.043px;">User Fields</span>
<span class="t" style="left:796.95px;top:531.00px;letter-spacing:0.410px;">Activities</span>
<span class="t" style="left:942.06px;top:531.00px;letter-spacing:-0.211px;">Payments</span>
<span class="t" style="left:1091.89px;top:531.00px;letter-spacing:0.331px;">Sent Notice</span>
<span class="t" style="left:73.89px;top:579.00px;letter-spacing:0.150px;color:#3d3d3d;">Individual Record</span>
<span class="t" style="left:76.53px;top:619.00px;letter-spacing:-0.109px;">Adell Barney</span>
<span class="t" style="left:76.17px;top:663.00px;letter-spacing:0.052px;">Fred and Adell Barney</span>
<span class="t" style="left:76.09px;top:689.00px;letter-spacing:-0.025px;">78 Rubble St</span>
<span class="t" style="left:76.17px;top:715.00px;letter-spacing:0.167px;">Big City, KY 40123</span>
<span class="t" style="left:78.06px;top:813.00px;letter-spacing:0.110px;">Phone Number:</span>
<span class="t" style="left:458.24px;top:615.00px;letter-spacing:0.049px;color:#8c8c8c;">Select</span>
<span class="t" style="left:439.89px;top:641.00px;letter-spacing:0.333px;color:#8c8c8c;">Individual</span>
<span class="t" style="left:465.93px;top:677.00px;letter-spacing:-0.246px;color:#8c8c8c;">Clear</span>
<span class="t" style="left:174.17px;top:875.00px;letter-spacing:-0.817px;color:#3d3d3d;">Fees</span>
<span class="t" style="left:228.06px;top:909.00px;letter-spacing:-0.131px;">Event Fee:</span>
<span class="t" style="left:404.41px;top:909.00px;letter-spacing:0.445px;">35.00</span>
<span class="t" style="left:232.87px;top:939.00px;letter-spacing:0.040px;">Act. Fees:</span>
<span class="t" style="left:418.02px;top:939.00px;letter-spacing:0.321px;">0.00</span>
<span class="t" style="left:170.17px;top:969.00px;letter-spacing:0.100px;">Processing Fee:</span>
<span class="t" style="left:418.02px;top:969.00px;letter-spacing:0.321px;">0.00</span>
<span class="t" style="left:228.06px;top:999.00px;letter-spacing:0.048px;">Payments:</span>
<span class="t" style="left:404.41px;top:999.00px;letter-spacing:0.445px;">35.00</span>
<span class="t" style="left:200.17px;top:1029.00px;letter-spacing:-0.014px;">Balance Due:</span>
<span class="t" style="left:418.02px;top:1029.00px;letter-spacing:0.321px;">0.00</span>
<span class="t" style="left:145.89px;top:1079.00px;letter-spacing:0.284px;">Source:</span>
<span class="t" style="left:236.06px;top:1079.00px;letter-spacing:0.170px;">Registration Entry</span>
<span class="t" style="left:46.06px;top:1111.00px;letter-spacing:0.332px;">Digital Signature:</span>
<span class="t" style="left:236.42px;top:1111.00px;letter-spacing:-1.177px;">n/a</span>
<span class="t" style="left:680.17px;top:583.00px;letter-spacing:0.140px;">Date Registered:</span>
<span class="t" style="left:863.89px;top:585.00px;letter-spacing:0.157px;">Sep 7 2023 12:00 PM</span>
<span class="t" style="left:1212.17px;top:583.00px;letter-spacing:0.296px;">Registration Number:</span>
<span class="t" style="left:1528.89px;top:583.00px;">1</span>
<span class="t" style="left:894.64px;top:621.00px;letter-spacing:0.230px;color:#8c8c8c;">Registration Canceled (*)</span>
<span class="t" style="left:1212.17px;top:621.00px;letter-spacing:0.166px;">Date Canceled:</span>
<span class="t" style="left:646.17px;top:683.00px;letter-spacing:0.110px;">First Name:</span>
<span class="t" style="left:781.26px;top:683.00px;letter-spacing:-0.138px;">Adell</span>
<span class="t" style="left:646.17px;top:723.00px;letter-spacing:0.121px;">Last Name:</span>
<span class="t" style="left:780.17px;top:723.00px;letter-spacing:-0.260px;">Barney</span>
<span class="t" style="left:624.17px;top:765.00px;letter-spacing:0.006px;">Badge Name:</span>
<span class="t" style="left:781.26px;top:763.00px;letter-spacing:-0.138px;">Adell</span>
<span class="t" style="left:681.96px;top:809.00px;letter-spacing:0.235px;">Gender:</span>
<span class="t" style="left:780.17px;top:805.00px;letter-spacing:-0.412px;">Female</span>
<span class="t" style="left:666.39px;top:867.00px;letter-spacing:0.208px;color:#8c8c8c;">Override Individual Address Record</span>
<span class="t" style="left:1438.06px;top:867.00px;letter-spacing:0.033px;">MapQuest</span>
<span class="t" style="left:673.53px;top:911.00px;letter-spacing:0.082px;">Address:</span>
<span class="t" style="left:780.41px;top:911.00px;letter-spacing:-0.024px;color:#8c8c8c;">78 Rubble St</span>
<span class="t" style="left:716.25px;top:1031.00px;letter-spacing:0.654px;">City:</span>
<span class="t" style="left:780.17px;top:1031.00px;letter-spacing:0.190px;color:#8c8c8c;">Big City</span>
<span class="t" style="left:1095.89px;top:1031.00px;letter-spacing:0.375px;">State:</span>
<span class="t" style="left:1170.17px;top:1031.00px;letter-spacing:-2.749px;color:#8c8c8c;">KY</span>
<span class="t" style="left:1264.94px;top:1031.00px;letter-spacing:0.152px;">Zip Code:</span>
<span class="t" style="left:1380.90px;top:1031.00px;letter-spacing:0.289px;color:#8c8c8c;">40123</span>
<span class="t" style="left:673.93px;top:1073.00px;letter-spacing:0.574px;">Country:</span>
<span class="t" style="left:700.17px;top:1115.00px;letter-spacing:-0.260px;">Phone</span>
<span class="t" style="left:1028.64px;top:1115.00px;letter-spacing:-0.334px;">Email:</span>
<span class="t" style="left:73.53px;top:1225.00px;letter-spacing:-0.913px;">Add</span>
<span class="t" style="left:186.64px;top:1225.00px;letter-spacing:0.631px;">Multi-Add</span>
<span class="t" style="left:341.93px;top:1225.00px;letter-spacing:-0.117px;">Change</span>
<span class="t" style="left:474.17px;top:1225.00px;letter-spacing:0.090px;">Delete</span>
<span class="t" style="left:624.17px;top:1225.00px;letter-spacing:0.031px;">Print</span>
<span class="t" style="left:753.53px;top:1225.00px;letter-spacing:-0.253px;">Address</span>
<span class="t" style="left:896.20px;top:1225.00px;letter-spacing:0.299px;">Individual</span>
<span class="t" style="left:1376.25px;top:1225.00px;color:#8c8c8c;">Cancel</span>
<span class="t" style="left:1512.24px;top:1225.00px;letter-spacing:-0.952px;color:#8c8c8c;">Save</span>
</div>
</body></html>
